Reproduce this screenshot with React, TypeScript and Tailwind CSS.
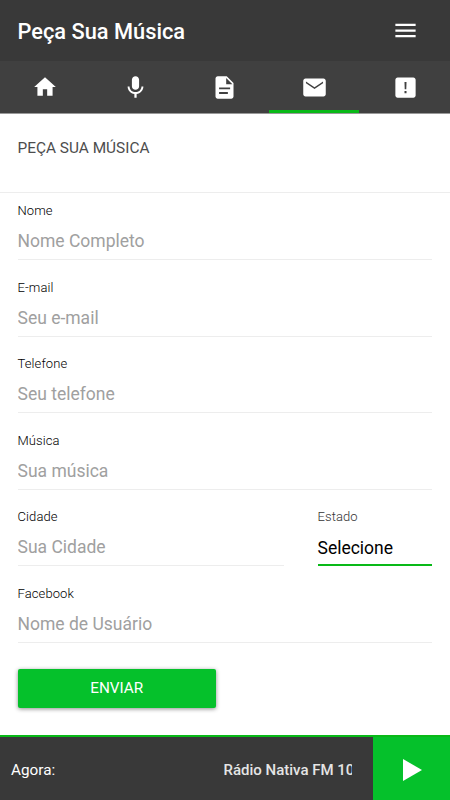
import clsx from "clsx";

const tabs = [
  { name: "Início", size: 26, className: "", path: "M10 20v-6h4v6h5v-8h3L12 3 2 12h3v8z" },
  {
    name: "Microfone",
    size: 27,
    className: "pl-[3px]",
    path: "M12 14c1.8 0 3.2-1.4 3.2-3.2V5.2C15.2 3.4 13.8 2 12 2S8.8 3.4 8.8 5.2v5.6c0 1.8 1.4 3.2 3.2 3.2zm5.3-3c0 3-2.54 5.1-5.3 5.1S6.7 14 6.7 11H5c0 3.41 2.72 6.23 6 6.72V21h2v-3.28c3.28-.48 6-3.3 6-6.72h-1.7z",
  },
  {
    name: "Notícias",
    size: 27,
    className: "pl-[2px]",
    path: "M14 2H6c-1.1 0-2 .9-2 2v16c0 1.1.9 2 2 2h12c1.1 0 2-.9 2-2V8l-6-6zm1 15.8H7.2V16H15v1.8zm2-4.3H7.2v-1.6H17v1.6zM13.5 9V3.5L19 9h-5.5z",
  },
  {
    name: "Pedidos",
    size: 27,
    active: true,
    className: "pl-px",
    path: "M20 4H4c-1.1 0-2 .9-2 2v12c0 1.1.9 2 2 2h16c1.1 0 2-.9 2-2V6c0-1.1-.9-2-2-2zm-.4 4.3l-7.6 5-7.6-5V6.7l7.6 5 7.6-5v1.6z",
  },
  {
    name: "Avisos",
    size: 27,
    className: "pl-[2px]",
    path: "M19 3H5c-1.1 0-2 .9-2 2v14c0 1.1.9 2 2 2h14c1.1 0 2-.9 2-2V5c0-1.1-.9-2-2-2zm-6.1 14h-1.8v-1.8h1.8V17zm-.2-3.5h-1.4L11.1 7h1.8l-.2 6.5z",
  },
];

function Icon({ path, size }: { path: string; size: number }) {
  return (
    <svg width={size} height={size} viewBox="0 0 24 24" fill="currentColor">
      <path d={path} />
    </svg>
  );
}

function Field({ label, placeholder, className }: { label: string; placeholder: string; className?: string }) {
  return (
    <label className={clsx("block h-[76.5px] pt-[19px]", className)}>
      <span className="block text-[13px] leading-4 font-light tracking-[0.1px] text-black">{label}</span>
      <input
        type="text"
        placeholder={placeholder}
        className="block h-[41px] w-full border-b border-[#ededed] bg-transparent pt-1 text-[17.5px] text-black outline-none placeholder:text-[#a0a0a0]"
      />
    </label>
  );
}

export default function App() {
  return (
    <div className="flex h-[800px] w-[450px] flex-col overflow-hidden bg-white font-['Roboto',sans-serif]">
      <header className="flex h-[61px] shrink-0 items-center justify-between bg-[#393939] pr-[31.5px] pl-[17.5px] text-white">
        <h1 className="pt-[3px] text-[21.8px] leading-7 font-medium">Peça Sua Música</h1>
        <button aria-label="Menu">
          <Icon size={27} path="M3 18h18v-2H3v2zm0-5h18v-2H3v2zm0-7v2h18V6H3z" />
        </button>
      </header>

      <nav className="grid h-[52px] shrink-0 grid-cols-[89.5px_89.5px_89.5px_90px_1fr] bg-[#404040] text-white">
        {tabs.map((tab) => (
          <button
            key={tab.name}
            aria-label={tab.name}
            className={clsx(
              "flex items-center justify-center border-b-3 pt-[3px]",
              tab.className,
              tab.active ? "border-[#09b918]" : "border-transparent",
            )}
          >
            <Icon size={tab.size} path={tab.path} />
          </button>
        ))}
      </nav>

      <main className="flex-1 border-t border-[#999]">
        <h2 className="h-[79px] border-b border-[#ededed] pt-6 pl-[17.5px] text-[15.4px] leading-5 text-[#4d4d4d]">
          PEÇA SUA MÚSICA
        </h2>

        <form className="-mt-[9px] pr-[18px] pl-[17.5px]">
          <Field label="Nome" placeholder="Nome Completo" />
          <Field label="E-mail" placeholder="Seu e-mail" />
          <Field label="Telefone" placeholder="Seu telefone" />
          <Field label="Música" placeholder="Sua música" />
          <div className="flex justify-between">
            <Field label="Cidade" placeholder="Sua Cidade" className="w-[266px]" />
            <div className="w-[114.5px] pt-[19px]">
              <span className="block text-[13px] leading-4 font-light tracking-[0.1px] text-[#333]">Estado</span>
              <button
                type="button"
                className="flex h-[40.5px] w-full items-center border-b-2 border-[#09b918] pt-[7px] text-[17.5px] text-black"
              >
                Selecione
              </button>
            </div>
          </div>
          <Field label="Facebook" placeholder="Nome de Usuário" />
          <button
            type="button"
            className="mt-[26px] flex h-[39px] w-[198.5px] items-center justify-center rounded-xs bg-[#05c12b] text-[15.3px] text-white shadow-[0_1px_4px_rgba(0,0,0,0.45)]"
          >
            ENVIAR
          </button>
        </form>
      </main>

      <footer className="flex h-[65px] shrink-0 items-stretch border-t-2 border-[#09b918] bg-[#393939] text-white">
        <div className="flex flex-1 items-center justify-between pt-[3px] pr-[21px] pl-[11px]">
          <span className="text-[15.3px]">Agora:</span>
          <div className="w-[128.5px] overflow-hidden text-[15px] font-medium whitespace-nowrap text-[#e5e5e5]">
            Rádio Nativa FM 104
          </div>
        </div>
        <button aria-label="Tocar" className="flex w-[77px] items-center justify-center bg-[#05c12b] pt-0.5 pl-0.5">
          <svg width="19" height="22" viewBox="0 0 19 22" fill="currentColor">
            <path d="M0 0v22l19-11z" />
          </svg>
        </button>
      </footer>
    </div>
  );
}
